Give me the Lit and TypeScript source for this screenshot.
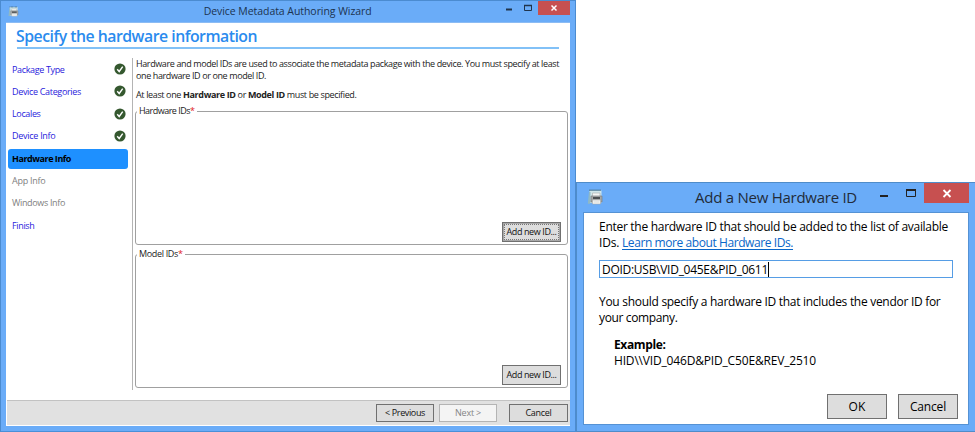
import { LitElement, html, css, nothing } from "lit";
import { customElement, property } from "lit/decorators.js";
import { classMap } from "lit/directives/class-map.js";

/** One line of text whose tracking is adjusted so that it fills a given width. */
@customElement("fit-line")
class FitLine extends LitElement {
  @property({ type: Number }) width = 0;

  static styles = css`
    :host { display: inline-block; white-space: pre; flex: none; }
  `;

  render() {
    return html`<slot></slot>`;
  }

  firstUpdated() {
    const count = (this.textContent ?? "").length;
    const natural = this.getBoundingClientRect().width;
    if (count && this.width) {
      this.style.letterSpacing = `${(this.width - natural) / count}px`;
    }
  }
}

@customElement("device-icon")
class DeviceIcon extends LitElement {
  static styles = css`
    :host { display: block; }
    svg { display: block; width: 100%; height: 100%; }
  `;
  render() {
    return html`<svg viewBox="0 0 16 16">
      <path d="M2.5 1.5H14.5V14H2.5Z" fill="#cfe6ea" />
      <path d="M2.5 1.2H14.5" stroke="#3f6068" stroke-width="1.4" stroke-dasharray="1 1" />
      <path d="M2 3L.8 14.8H3.5V3Z" fill="#8fb9c6" />
      <path d="M5.5 4H13V7.5H5.5Z" fill="#f4f6f4" stroke="#a4aaa8" stroke-width=".6" />
      <path d="M4 7H15V13H4Z" fill="#a5a8a8" stroke="#7c8082" stroke-width=".7" />
      <path d="M6 8H13V10H6Z" fill="#4c5052" />
      <path d="M5.5 11H13.5V15H5.5Z" fill="#fafaf8" stroke="#a4a8aa" stroke-width=".6" />
      <path d="M6.5 13H12.5" stroke="#c0c4c6" stroke-width=".7" />
    </svg>`;
  }
}

@customElement("check-icon")
class CheckIcon extends LitElement {
  static styles = css`
    :host { display: block; width: 12px; height: 12px; }
    svg { display: block; }
  `;
  render() {
    return html`<svg width="12" height="12" viewBox="0 0 12 12">
      <circle cx="6" cy="6" r="5.6" fill="#35582f" />
      <path d="M3.2 6.2L5.2 8.5L8.7 3.6" fill="none" stroke="#fff" stroke-width="1.4" />
    </svg>`;
  }
}

interface Step { label: string; width: number; state: "done" | "current" | "off" | "open"; }

const STEPS: Step[] = [
  { label: "Package Type", width: 52.5, state: "done" },
  { label: "Device Categories", width: 69, state: "done" },
  { label: "Locales", width: 28.5, state: "done" },
  { label: "Device Info", width: 43.5, state: "done" },
  { label: "Hardware Info", width: 59, state: "current" },
  { label: "App Info", width: 33.5, state: "off" },
  { label: "Windows Info", width: 53, state: "off" },
  { label: "Finish", width: 22.5, state: "open" },
];

@customElement("wizard-window")
class WizardWindow extends LitElement {
  static styles = css`
    * { box-sizing: border-box; }
    :host {
      display: flex; flex-direction: column; box-sizing: border-box;
      width: 576px; height: 432px; padding: 0 5px 5px 5px;
      background: #6aacf8; border: 1px solid #4b8bd0; border-bottom-color: #4a90d8;
      font: 9px/12px "Open Sans", "Noto Sans", sans-serif; color: #222;
    }
    .bar { display: flex; height: 21px; flex: none; }
    .bar device-icon { width: 11px; height: 11px; margin: 5px 0 0 2px; }
    .title { width: 185px; margin: 3px 0 0 185px; font-size: 10.5px; line-height: 15px; color: #1c3350; }
    .controls { display: flex; margin-left: 122px; }
    .controls svg { display: block; flex: none; }
    .body { flex: 1; display: flex; flex-direction: column; background: #fff; border-top: 1px solid #8cbcf4; min-height: 0; }
    .head {
      margin: 1px 11px 0 11px; height: 25px; border-bottom: 2px solid #82c1f7; flex: none;
      font-size: 15.8px; font-weight: 600; line-height: 25px; color: #2a8bee;
    }
    .head fit-line { margin-left: -1px; }
    .main { display: flex; height: 332px; margin-top: 9px; flex: none; }
    .steps { width: 120px; margin: 0 4px 0 2px; flex: none; padding-top: 1.6px; }
    .step {
      display: flex; align-items: center; justify-content: space-between;
      height: 20px; margin-bottom: 2.3px; padding: 0 2px 0 4px; border-radius: 3px; color: #2a22dc;
    }
    .step check-icon { margin-top: -1px; }
    .step.current { background: #1e90ff; color: #000; font-weight: 700; }
    .step.off { color: #808080; }
    .content { border-left: 1px solid #b4b4b4; padding-left: 2px; width: 436px; flex: none; }
    .intro { padding-left: 1px; height: 42px; }
    .intro fit-line { display: block; width: max-content; line-height: 11.5px; }
    .intro .note { margin-top: 8px; }
    .group {
      position: relative; width: 433px; height: 134px; margin-top: 11px;
      border: 1px solid #a0a0a0; border-radius: 3px;
      display: flex; align-items: flex-end; justify-content: flex-end; padding: 0 6px 2px;
    }
    .group + .group { margin-top: 9px; }
    .legend { position: absolute; left: 1px; top: -8px; background: #fff; padding: 0 1px 0 2px; line-height: 13px; display: flex; }
    .legend i { color: #e02020; font-style: normal; width: 6px; }
    .button {
      width: 59px; height: 20px; border: 1px solid #707070; background: #ddd;
      display: flex; align-items: center; justify-content: center; color: #111;
    }
    .button.focus { outline: 1px dotted #777; outline-offset: -3px; box-shadow: inset 0 0 0 1px #a8a8a8; }
    .button.off { background: #f4f4f4; border-color: #b4b4b4; color: #858585; }
    .foot {
      display: flex; height: 25px; margin: auto 0 1px 1px; padding: 3px 2px 0 0; justify-content: flex-end;
      background: #e1e1e1; border-top: 1px solid #c2c2c2;
    }
    .foot .button { height: 18px; margin-left: 5px; width: 58px; }
    .foot .button:last-child { margin-left: 12px; width: 59px; }
  `;

  private group(label: string, width: number, focus: boolean) {
    return html`<div class="group">
      <div class="legend"><fit-line width=${width}>${label}</fit-line><i>*</i></div>
      <div class=${classMap({ button: true, focus })}><fit-line width="50">Add new ID...</fit-line></div>
    </div>`;
  }

  render() {
    return html`
      <div class="bar">
        <device-icon></device-icon>
        <div class="title"><fit-line width="168">Device Metadata Authoring Wizard</fit-line></div>
        <div class="controls"><svg width="65" height="14" viewBox="1 0 65 14">
          <path d="M2 8.5H8" stroke="#20344c" stroke-width="2" />
          <path d="M20.5 4.5H27.5V9.5H20.5Z" fill="none" stroke="#20344c" />
          <path d="M20 4.5H28" stroke="#20344c" stroke-width="1.5" />
          <path d="M34 0H66V14H34Z" fill="#c75050" />
          <path d="M47.5 4.5L52.5 9.5M52.5 4.5L47.5 9.5" stroke="#fff" stroke-width="1.5" />
        </svg></div>
      </div>
      <div class="body">
        <div class="head"><fit-line width="241">Specify the hardware information</fit-line></div>
        <div class="main">
          <div class="steps">
            ${STEPS.map((s) => html`<div class=${classMap({ step: true, [s.state]: true })}>
              <fit-line width=${s.width}>${s.label}</fit-line>
              ${s.state === "done" ? html`<check-icon></check-icon>` : nothing}
            </div>`)}
          </div>
          <div class="content">
            <div class="intro">
              <fit-line width="423">Hardware and model IDs are used to associate the metadata package with the device. You must specify at least</fit-line>
              <fit-line width="130">one hardware ID or one model ID.</fit-line>
              <fit-line class="note" width="220.5">At least one <b>Hardware ID</b> or <b>Model ID</b> must be specified.</fit-line>
            </div>
            ${this.group("Hardware IDs", 51, true)}
            ${this.group("Model IDs", 39, false)}
          </div>
        </div>
        <div class="foot">
          <div class="button"><fit-line width="40">&lt; Previous</fit-line></div>
          <div class="button off"><fit-line width="26">Next &gt;</fit-line></div>
          <div class="button"><fit-line width="26">Cancel</fit-line></div>
        </div>
      </div>`;
  }
}

@customElement("id-dialog")
class IdDialog extends LitElement {
  static styles = css`
    * { box-sizing: border-box; }
    :host {
      display: flex; flex-direction: column; box-sizing: border-box;
      width: 399px; height: 250px; background: #6aacf8; padding: 0 6px 6px;
      border: 1px solid #4f8cc9; border-right: 0;
      font: 12px/16px "Open Sans", "Noto Sans", sans-serif; color: #000;
    }
    .bar { display: flex; height: 29px; flex: none; }
    .bar device-icon { width: 16px; height: 16px; margin: 6px 0 0 4px; }
    .title { width: 165px; margin: 4px 0 0 92px; font-size: 15px; line-height: 21px; color: #222b38; }
    .controls { margin-left: 16px; }
    .controls svg { display: block; }
    .body { flex: 1; background: #fff; border: 1px solid #5592d4; padding: 6px 10px 0 15px; }
    .line { display: flex; height: 16px; }
    .link { color: #0a66c8; text-decoration: underline; text-underline-offset: 2px; }
    .field { display: flex; width: 354px; height: 18px; margin: 9px 0 16px; border: 1px solid #569de5; padding: 0 2px; line-height: 17px; }
    .caret { width: 1px; height: 15px; margin-top: 1px; background: #000; }
    .example { margin: 11px 0 0 15px; }
    .example b { font-weight: 700; }
    .actions { display: flex; justify-content: flex-end; gap: 11px; margin-top: 25px; }
    .button { display: flex; align-items: center; justify-content: center; width: 60px; height: 25px; background: #ddd; border: 1px solid #707070; }
  `;

  render() {
    return html`
      <div class="bar">
        <device-icon></device-icon>
        <div class="title"><fit-line width="162">Add a New Hardware ID</fit-line></div>
        <div class="controls"><svg width="93" height="22" viewBox="876 183 93 22">
          <path d="M880 196H888" stroke="#222" stroke-width="2" />
          <path d="M906.5 190V196.5H915.5V190" fill="none" stroke="#222" />
          <path d="M906 190H916" stroke="#222" stroke-width="2" />
          <path d="M924 183H969V203H924Z" fill="#c75050" />
          <path d="M943.5 190L950.5 197M950.5 190L943.5 197" stroke="#fff" stroke-width="1.8" />
        </svg></div>
      </div>
      <div class="body">
        <div class="line"><fit-line width="349">Enter the hardware ID that should be added to the list of available</fit-line></div>
        <div class="line"><fit-line width="23">IDs. </fit-line><fit-line class="link" width="171">Learn more about Hardware IDs.</fit-line></div>
        <div class="field"><fit-line width="166">DOID:USB\\VID_045E&amp;PID_0611</fit-line><span class="caret"></span></div>
        <div class="line"><fit-line width="341.5">You should specify a hardware ID that includes the vendor ID for</fit-line></div>
        <div class="line"><fit-line width="78.5">your company.</fit-line></div>
        <div class="example">
          <div class="line"><b><fit-line width="51.5">Example:</fit-line></b></div>
          <div class="line"><fit-line width="202">HID\\\\VID_046D&amp;PID_C50E&amp;REV_2510</fit-line></div>
        </div>
        <div class="actions">
          <div class="button"><fit-line width="17">OK</fit-line></div>
          <div class="button"><fit-line width="36">Cancel</fit-line></div>
        </div>
      </div>`;
  }
}

@customElement("app-root")
class AppRoot extends LitElement {
  static styles = css`
    :host { display: flex; align-items: flex-end; width: 975px; height: 432px; background: #fff; overflow: hidden; }
  `;
  render() {
    return html`<wizard-window></wizard-window><id-dialog></id-dialog>`;
  }
}
